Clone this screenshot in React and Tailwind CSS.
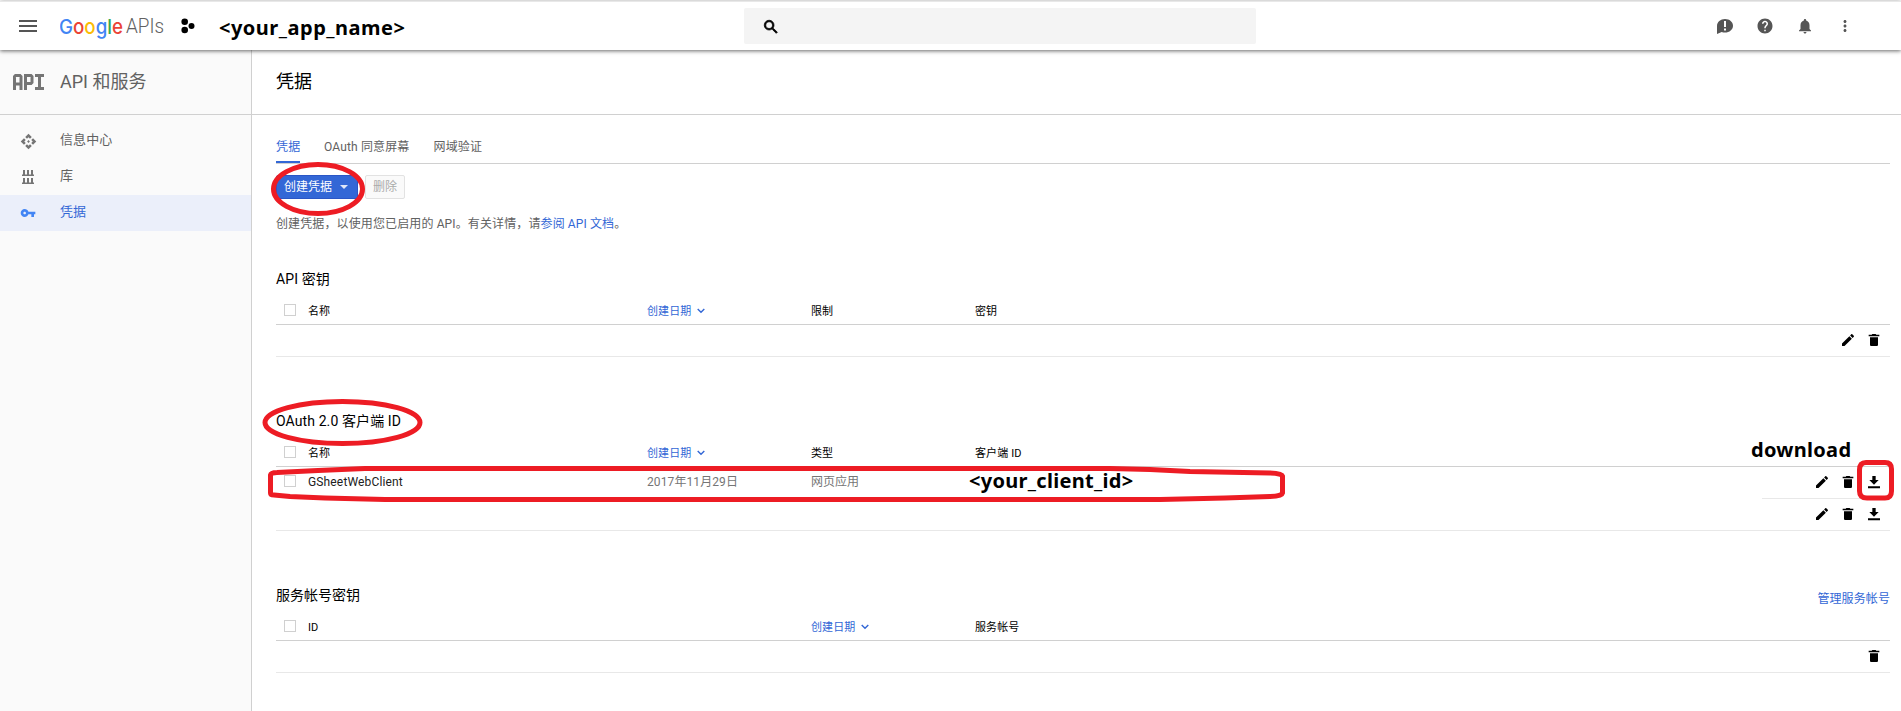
import React from "react";

const TRASH = "M6 19c0 1.1.9 2 2 2h8c1.1 0 2-.9 2-2V8H6v11zM20 4h-4.500l-1-1h-5l-1 1H4v2.500h16V4z";
const PENCIL = "M3 17.25V21h3.75L17.81 9.94l-3.75-3.75L3 17.25zM20.71 7.04c.39-.39.39-1.02 0-1.41l-2.34-2.34c-.39-.39-1.02-.39-1.41 0l-1.83 1.83 3.75 3.75 1.83-1.83z";
const DOWNLOAD = "M9.500 3h5v6h4.500l-7 7-7-7h4.500zM3 18.500h18V21.500H3z";

function Icon({ d, className = "size-4" }) {
  return (
    <svg viewBox="0 0 24 24" fill="currentColor" className={`shrink-0 ${className}`}>
      <path d={d} fillRule="evenodd" />
    </svg>
  );
}

function Logo() {
  return (
    <svg width="106" height="32" className="shrink-0" fontFamily="Inter, Roboto, sans-serif">
      <text x="-1" y="23.5" fontSize="20.5" fontWeight="500" textLength="64" lengthAdjust="spacingAndGlyphs">
        <tspan fill="#4285f4">G</tspan>
        <tspan fill="#ea4335">o</tspan>
        <tspan fill="#fbbc05">o</tspan>
        <tspan fill="#4285f4">g</tspan>
        <tspan fill="#34a853">l</tspan>
        <tspan fill="#ea4335">e</tspan>
      </text>
      <text x="66" y="23" fontSize="19.5" fontWeight="300" fill="#616161" fontFamily="Roboto, sans-serif" textLength="38" lengthAdjust="spacingAndGlyphs">APIs</text>
    </svg>
  );
}

function Header() {
  return (
    <header className="relative z-10 flex h-[49px] shrink-0 items-center border-t border-[#e8e8e8] bg-white pl-[18px] shadow-[0_1px_4px_rgba(0,0,0,0.6)]">
      <svg width="20" height="14" className="shrink-0" fill="#555">
        <path d="M1 1h18v2H1zM1 6h18v2H1zM1 11h18v2H1z" />
      </svg>
      <div className="ml-[22px] flex"><Logo /></div>
      <svg width="16" height="16" className="ml-[14px] shrink-0" fill="#000">
        <circle cx="4.7" cy="3.7" r="3.3" />
        <circle cx="4.7" cy="12" r="3.3" />
        <circle cx="11.5" cy="8" r="3" />
      </svg>
      <div className="ml-[23px] w-[525px] pt-[3px] font-['Noto_Sans'] text-[20px] font-bold leading-6 tracking-[0.5px] text-black">&lt;your_app_name&gt;</div>
      <div className="flex h-9 w-[512px] items-center rounded-xs bg-[#f4f4f4] pl-[18px]">
        <Icon className="mt-px size-[18px] stroke-current stroke-1" d="M15.5 14h-.79l-.28-.27A6.471 6.471 0 0 0 16 9.5 6.5 6.5 0 1 0 9.500 16c1.61 0 3.090-.59 4.230-1.570l.27.28v.79l5 4.990L20.490 19l-4.990-5zm-6 0C7.010 14 5 11.990 5 9.500S7.010 5 9.500 5 14 7.010 14 9.500 11.990 14 9.500 14z" />
      </div>
      <div className="ml-auto mr-[47px] flex items-center gap-[22px] text-[#555]">
        <svg width="18" height="18">
          <path fill="currentColor" d="M9 2C13.500 2 17 4.900 17 8.700S13.500 15.500 9 15.500c-1.200 0-2.300-.2-3.300-.6L1 17V9C1 4.900 4.500 2 9 2z" />
          <path fill="#fff" d="M8 4h2v6H8zM8 11.500h2v2H8z" />
        </svg>
        <Icon className="size-[18px]" d="M12 2C6.480 2 2 6.480 2 12s4.480 10 10 10 10-4.480 10-10S17.520 2 12 2zm1 17h-2v-2h2v2zm2.070-7.750l-.9.920C13.450 12.900 13 13.500 13 15h-2v-.5c0-1.100.45-2.100 1.170-2.830l1.240-1.260c.37-.36.59-.86.59-1.410 0-1.100-.9-2-2-2s-2 .9-2 2H8c0-2.210 1.790-4 4-4s4 1.790 4 4c0 .88-.36 1.680-.93 2.250z" />
        <Icon className="size-[18px]" d="M12 22c1.100 0 2-.9 2-2h-4c0 1.100.89 2 2 2zm6-6v-5c0-3.070-1.640-5.640-4.500-6.320V4c0-.83-.67-1.500-1.500-1.500s-1.500.67-1.500 1.500v.68C7.630 5.360 6 7.920 6 11v5l-2 2v1h16v-1l-2-2z" />
        <Icon className="size-[18px]" d="M12 8c1.100 0 2-.9 2-2s-.9-2-2-2-2 .9-2 2 .9 2 2 2zm0 2c-1.100 0-2 .9-2 2s.9 2 2 2 2-.9 2-2-.9-2-2-2zm0 6c-1.100 0-2 .9-2 2s.9 2 2 2 2-.9 2-2-.9-2-2-2z" />
      </div>
    </header>
  );
}

function NavItem({ icon, label, active }) {
  return (
    <div className={`flex h-9 items-center pl-5 text-[13px] ${active ? "bg-[#ebeffa] text-[#3367d6]" : "text-[#616161]"}`}>
      <div className="flex w-10">{icon}</div>
      <span className="-mt-0.5 tracking-[0.1px]">{label}</span>
    </div>
  );
}

function Sidebar() {
  return (
    <aside className="flex w-[252px] shrink-0 flex-col border-r border-[#d0d0d0] bg-[#fafafa]">
      <div className="flex h-[65px] items-center border-b border-[#d0d0d0] pl-[13px] text-[18px] text-[#616161]">
        <svg width="32" height="16" fill="none" stroke="#757575" strokeWidth="3" className="mr-[15px] shrink-0">
          <path d="M1.500 16V2.500L2.500 1.500H7L8 2.500V16M1.500 10H8M12.500 16V1.500H18L19 2.500V8.500L18 9.500H12.500M22 1.500H31M22 14.500H31M26.500 1V15" />
        </svg>
        <span className="-mt-0.5">API 和服务</span>
      </div>
      <nav className="pt-2">
        <NavItem
          label="信息中心"
          icon={<Icon className="size-[17px] text-[#757575]" d="M14 12l-2 2-2-2 2-2zM12 6l2.120 2.120 2.500-2.500L12 1 7.380 5.620l2.500 2.500zM6 12l2.120-2.120-2.500-2.500L1 12l4.620 4.620 2.500-2.500zM18 12l-2.120 2.120 2.500 2.500L23 12l-4.620-4.620-2.500 2.500zM12 18l-2.120-2.120-2.500 2.500L12 23l4.620-4.620-2.500-2.500z" />}
        />
        <NavItem
          label="库"
          icon={
            <svg width="16" height="16" fill="#757575">
              <path d="M3 1h2v5H3zM7 1h2v5H7zM11 1h2v5h-2zM2 5.500h12V7H2zM3 9h2v5H3zM7 9h2v5H7zM11 9h2v5h-2zM2 13.500h12V15H2z" />
            </svg>
          }
        />
        <NavItem
          active
          label="凭据"
          icon={<Icon className="size-4 text-[#4285f4]" d="M12.650 10C11.830 7.670 9.610 6 7 6c-3.310 0-6 2.690-6 6s2.690 6 6 6c2.610 0 4.830-1.670 5.650-4H17v4h4v-4h2v-4H12.650zM7 14c-1.100 0-2-.9-2-2s.9-2 2-2 2 .9 2 2-.9 2-2 2z" />}
        />
      </nav>
    </aside>
  );
}

function Checkbox() {
  return <span className="-mt-px mb-px block size-3 border border-[#d0d0d0] bg-white" />;
}

function Sort() {
  return (
    <span className="flex items-center gap-1.5 pt-0.5 text-[#3367d6]">
      创建日期
      <svg width="8" height="6" fill="none" stroke="currentColor" strokeWidth="1.400" className="-mt-0.5"><path d="M.7 1L4 4.300 7.300 1" /></svg>
    </span>
  );
}

function HeadRow({ wide, cells }) {
  return (
    <div className={`grid h-[29px] items-center border-b border-[#d0d0d0] pl-2 pt-0.5 text-[11px] tracking-[0.1px] text-black ${wide ? "grid-cols-[24px_503px_164px_1fr]" : "grid-cols-[24px_339px_164px_164px_1fr]"}`}>
      <Checkbox />
      {cells.map((c, i) => (c === "sort" ? <Sort key={i} /> : <span key={i} className="pt-0.5">{c}</span>))}
    </div>
  );
}

function Actions({ icons }) {
  return (
    <div className="ml-auto flex items-center gap-2.5 pb-0.5 text-black">
      {icons.map((d, i) => <Icon key={i} d={d} />)}
    </div>
  );
}

function Credentials() {
  return (
    <main className="min-w-0 flex-1 bg-white">
      <div className="flex h-[65px] items-center border-b border-[#d0d0d0] pl-6 text-[18px] text-black"><span className="-mt-0.5">凭据</span></div>
      <div className="ml-6 mr-[11px] flex flex-col">
        <div className="flex h-[49px] items-end gap-6 border-b border-[#d0d0d0] text-[12px] leading-4 tracking-[0.15px] text-[#616161]">
          <span className="h-6 w-6 whitespace-nowrap border-b-2 border-[#3367d6] text-[#3367d6]">凭据</span>
          <span className="h-6">OAuth 同意屏幕</span>
          <span className="h-6">网域验证</span>
        </div>
        <div className="mt-[11px] flex gap-[7px] text-[12px]">
          <div className="flex h-6 w-[82px] items-center gap-2 rounded-xs border border-[#2a56c6] bg-[#3367d6] pl-[7px] text-white">
            创建凭据
            <svg width="8" height="4" fill="#dfe6f8"><path d="M0 0h8L4 4z" /></svg>
          </div>
          <div className="flex h-6 w-10 items-center justify-center rounded-xs border border-[#e2e2e2] bg-[#fafafa] text-[#aaa]">删除</div>
        </div>
        <p className="mt-[17px] h-4 text-[12px] leading-4 tracking-[0.12px] text-[#616161]">
          创建凭据，以使用您已启用的 API。有关详情，请<span className="text-[#3367d6]">参阅 API 文档</span>。
        </p>

        <h2 className="mt-[37px] h-5 text-[14px] leading-5 tracking-[0.1px] text-black">API 密钥</h2>
        <div className="mt-[7px]"><HeadRow cells={["名称", "sort", "限制", "密钥"]} /></div>
        <div className="flex h-8 border-b border-[#e8e8e8] pr-2"><Actions icons={[PENCIL, TRASH]} /></div>

        <h2 className="mt-[54px] h-5 text-[14px] leading-5 tracking-[0.1px] text-black">OAuth 2.0 客户端 ID</h2>
        <div className="mt-[7px]"><HeadRow cells={["名称", "sort", "类型", "客户端 ID"]} /></div>
        <div className="flex h-8 text-[12px] text-[#757575]">
          <div className="grid w-[1486px] grid-cols-[24px_339px_164px_158px_1fr] items-center pb-[3px] pl-2">
            <Checkbox />
            <span className="tracking-[0.15px] text-[#212121]">GSheetWebClient</span>
            <span className="tracking-[0.1px]">2017年11月29日</span>
            <span>网页应用</span>
            <span className="-mt-0.5 font-['Noto_Sans'] text-[20px] font-bold leading-5 tracking-[0.3px] text-black">&lt;your_client_id&gt;</span>
          </div>
          <div className="flex flex-1 border-b border-[#e8e8e8] pr-2"><Actions icons={[PENCIL, TRASH, DOWNLOAD]} /></div>
        </div>
        <div className="flex h-8 border-b border-[#e8e8e8] pr-2"><Actions icons={[PENCIL, TRASH, DOWNLOAD]} /></div>

        <div className="mt-[54px] flex h-5 justify-between text-[14px] leading-5 text-black">
          <h2>服务帐号密钥</h2>
          <span className="pt-1.5 text-[12px] leading-4 tracking-[0.1px] text-[#3367d6]">管理服务帐号</span>
        </div>
        <div className="mt-[7px]"><HeadRow wide cells={["ID", "sort", "服务帐号"]} /></div>
        <div className="flex h-8 border-b border-[#e8e8e8] pr-2"><Actions icons={[TRASH]} /></div>
      </div>
    </main>
  );
}

/* Hand-drawn marks laid over the page */
function Annotations() {
  return (
    <>
      <svg className="pointer-events-none absolute inset-0 z-20" width="1901" height="711" fill="none" stroke="#ed1c24" strokeWidth="5" strokeLinejoin="round">
        <ellipse cx="318" cy="189" rx="44.500" ry="24.500" />
        <ellipse cx="342.5" cy="422.5" rx="77.500" ry="21" />
        <path d="M270.500 475Q271 472.500 277 472.500L318 470.500 365 468.500H1110L1150 469.500 1190 471.500 1270 473Q1282 473.500 1282.500 476V493Q1282 496 1270 496.500L1225 498 1160 499.500H385L325 498 290 496.500 274 495Q270.500 495 270.500 493Z" />
        <path d="M1866 462.500H1885Q1891.500 462.500 1891.500 469V491Q1891.500 498 1885 498H1867Q1859.500 498 1859.500 491V470Q1859.500 462.500 1866 462.500Z" />
      </svg>
      <div className="absolute left-[1751px] top-[438px] z-20 font-['Noto_Sans'] text-[20px] font-bold leading-6 tracking-[0.3px] text-black">download</div>
    </>
  );
}

export default function App() {
  return (
    <div className="relative flex h-[711px] w-[1901px] flex-col overflow-hidden bg-white pt-px font-[Roboto,'Noto_Sans_CJK_SC',sans-serif]">
      <Header />
      <div className="flex flex-1">
        <Sidebar />
        <Credentials />
      </div>
      <Annotations />
    </div>
  );
}
